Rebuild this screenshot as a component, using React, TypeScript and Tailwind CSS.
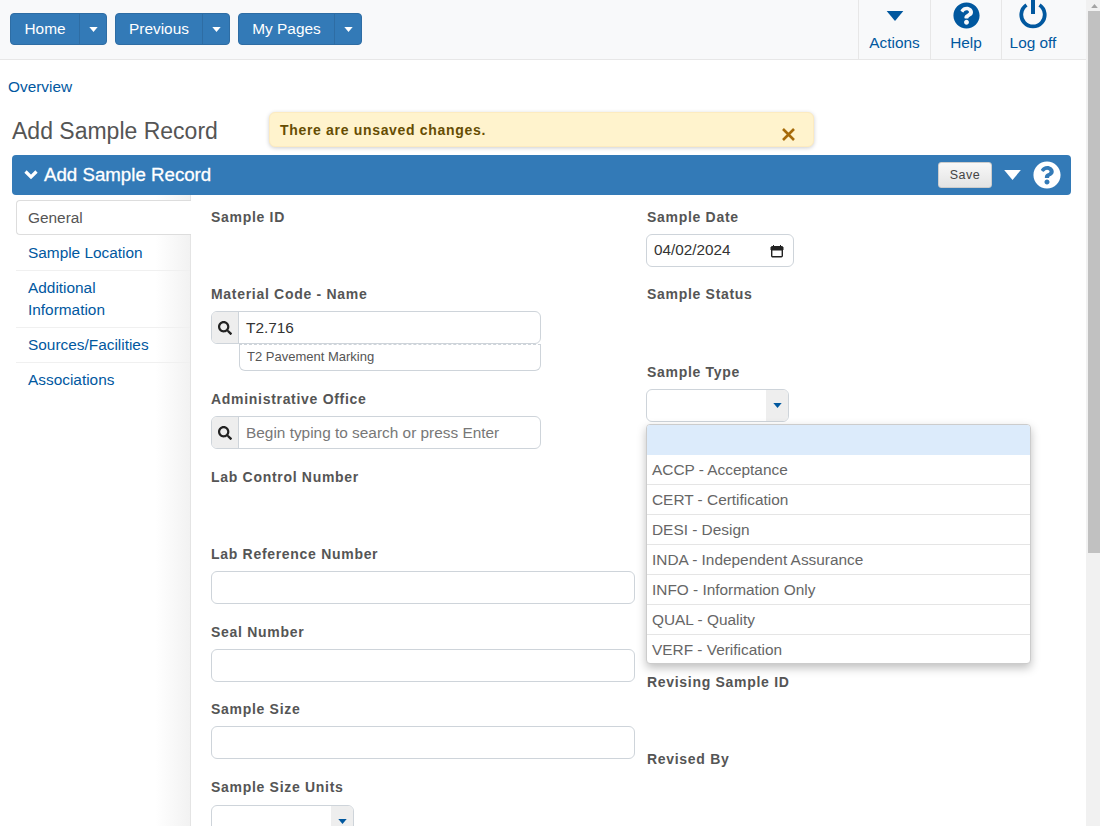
import { FaQuestionCircle, FaSearch } from "react-icons/fa";

const labelClass = "block text-[14px] font-bold leading-[20px] tracking-[0.7px] text-[#555]";
const inputClass = "h-[33px] rounded-[6px] border border-[#ced4da] bg-white";

function Caret({ className }: { className: string }) {
  return (
    <svg viewBox="0 0 10 6" className={className} aria-hidden="true">
      <path d="M0 0h10L5 6z" fill="currentColor" />
    </svg>
  );
}

function NavButton({ label, width }: { label: string; width: number }) {
  return (
    <div className="flex h-[32px] rounded-[4px] border border-[#2e6da4] bg-[#337ab7] text-[15.4px] text-white">
      <span className="flex items-center justify-center" style={{ width }}>
        {label}
      </span>
      <span className="flex w-[27px] items-center justify-center border-l border-[#2e6da4]">
        <Caret className="h-[5px] w-[9px]" />
      </span>
    </div>
  );
}

function HeaderAction({
  label,
  width,
  className = "",
  children,
}: {
  label: string;
  width: number;
  className?: string;
  children: React.ReactNode;
}) {
  return (
    <div
      className={`flex flex-col items-center border-l border-[#e7e7e7] text-[15.4px] text-[#01589f] ${className}`}
      style={{ width }}
    >
      <div className="flex h-[32px] items-center justify-center">{children}</div>
      <span className="mt-[1px] leading-[20px]">{label}</span>
    </div>
  );
}

function Field({ label, className, children }: { label: string; className: string; children?: React.ReactNode }) {
  return (
    <div className={className}>
      <label className={labelClass}>{label}</label>
      {children}
    </div>
  );
}

function SearchInput({ value, placeholder }: { value?: string; placeholder?: string }) {
  return (
    <div className={`flex w-[330px] overflow-hidden ${inputClass}`}>
      <span className="flex w-[27px] items-center justify-center border-r border-[#ced4da] bg-[#eee] text-[#222]">
        <FaSearch className="h-[14px] w-[14px]" />
      </span>
      <span className={`pl-[7px] text-[15.4px] leading-[31px] ${value ? "text-[#333]" : "text-[#777]"}`}>
        {value ?? placeholder}
      </span>
    </div>
  );
}

function SelectBox({ width }: { width: string }) {
  return (
    <div className={`flex justify-end overflow-hidden ${width} ${inputClass}`}>
      <span className="flex w-[22px] items-center justify-center bg-[#eee] text-[#01589f]">
        <Caret className="h-[5px] w-[9px]" />
      </span>
    </div>
  );
}

const sideLinks = ["Sample Location", "Additional Information", "Sources/Facilities", "Associations"];
const typeOptions = [
  "ACCP - Acceptance",
  "CERT - Certification",
  "DESI - Design",
  "INDA - Independent Assurance",
  "INFO - Information Only",
  "QUAL - Quality",
  "VERF - Verification",
];

export default function App() {
  return (
    <div className="relative flex h-[826px] w-[1100px] overflow-hidden bg-white font-['Liberation_Sans',Arial,sans-serif]">
      <div className="w-[1086px] shrink-0">
        {/* Top bar */}
        <header className="flex h-[60px] justify-between border-b border-[#e7e7e7] bg-[#f8f9fa]">
          <div className="flex gap-[8px] pl-[10px] pt-[13px]">
            <NavButton label="Home" width={68} />
            <NavButton label="Previous" width={86} />
            <NavButton label="My Pages" width={95} />
          </div>
          <div className="flex">
            <HeaderAction label="Actions" width={72}>
              <Caret className="-mt-[1px] h-[10px] w-[18px]" />
            </HeaderAction>
            <HeaderAction label="Help" width={71}>
              <FaQuestionCircle className="-mt-[2px] h-[27px] w-[27px]" />
            </HeaderAction>
            <HeaderAction label="Log off" width={85} className="pr-[22px]">
              <svg viewBox="0 0 28 29" className="-mt-[3px] h-[29px] w-[28px]" aria-hidden="true">
                <path d="M7.5 5a11.7 11.7 0 1 0 13 0" fill="none" stroke="currentColor" strokeWidth="3.8" />
                <path d="M14 0v14" stroke="currentColor" strokeWidth="4" />
              </svg>
            </HeaderAction>
          </div>
        </header>

        <div className="pl-[8px] pt-[17px] text-[15.4px] leading-[20px] text-[#01589f]">Overview</div>

        <h1 className="pl-[12px] pt-[18px] text-[23px] leading-[32px] text-[#555]">Add Sample Record</h1>

        {/* Panel heading */}
        <div className="ml-[12px] mt-[8px] flex h-[40px] w-[1059px] items-center rounded-[4px] bg-[#337ab7] pl-[12px] pr-[10px] text-white">
          <svg viewBox="0 0 14 10" className="h-[10px] w-[14px]" aria-hidden="true">
            <path d="M1.5 1.5l5.5 5.5 5.5-5.5" fill="none" stroke="currentColor" strokeWidth="3.2" />
          </svg>
          <span className="ml-[6px] text-[18.7px] leading-[20px] [-webkit-text-stroke:0.3px_white]">Add Sample Record</span>
          <div className="ml-auto flex items-center">
            <span className="flex h-[26px] w-[54px] items-center justify-center rounded-[3px] border border-[#ccc] bg-gradient-to-b from-[#f8f8f8] to-[#e4e4e4] text-[12.5px] tracking-[0.5px] text-[#444]">
              Save
            </span>
            <Caret className="ml-[11px] h-[10px] w-[19px]" />
            <FaQuestionCircle className="ml-[11px] h-[28px] w-[28px]" />
          </div>
        </div>

        <div className="flex">
          {/* Side tabs */}
          <nav className="ml-[16px] h-[631px] w-[175px] shrink-0 border-r border-[#e4e4e4] bg-gradient-to-r from-white from-80% to-[#f2f2f2] text-[15.4px]">
            <div className="mb-[1px] mt-[5px] h-[35px] w-[175px] rounded-l-[4px] border border-r-0 border-[#ddd] bg-white pl-[11px] leading-[33px] text-[#555]">
              General
            </div>
            {sideLinks.map((link) => (
              <div key={link} className="border-b border-[#f0f0f0] py-[6px] pl-[12px] pr-[40px] leading-[22px] text-[#01589f] last:border-b-0">
                {link}
              </div>
            ))}
          </nav>

          {/* Form columns */}
          <div className="flex pl-[20px]">
            <div className="w-[436px]">
              <Field label="Sample ID" className="h-[89px] pt-[12px]" />
              <Field label="Material Code - Name" className="h-[105px]">
                <div className="mt-[7px]"><SearchInput value="T2.716" /></div>
                <div className="ml-[28px] h-[27px] w-[302px] rounded-b-[6px] border border-t-0 border-[#ced4da] pl-[7px] text-[13px] leading-[24px] text-[#555] [border-top:1px_dashed_#ced4da]">
                  T2 Pavement Marking
                </div>
              </Field>
              <Field label="Administrative Office" className="h-[78px]">
                <div className="mt-[7px]"><SearchInput placeholder="Begin typing to search or press Enter" /></div>
              </Field>
              <Field label="Lab Control Number" className="h-[77px]" />
              <Field label="Lab Reference Number" className="h-[78px]">
                <div className={`mt-[7px] w-[424px] ${inputClass}`} />
              </Field>
              <Field label="Seal Number" className="h-[77px]">
                <div className={`mt-[7px] w-[424px] ${inputClass}`} />
              </Field>
              <Field label="Sample Size" className="h-[78px]">
                <div className={`mt-[7px] w-[424px] ${inputClass}`} />
              </Field>
              <Field label="Sample Size Units" className="h-[60px]">
                <div className="mt-[8px]"><SelectBox width="w-[143px]" /></div>
              </Field>
            </div>

            <div className="w-[400px]">
              <Field label="Sample Date" className="h-[89px] pt-[12px]">
                <div className={`-ml-[1px] mt-[7px] flex w-[148px] items-center justify-between pl-[7px] pr-[9px] text-[15.3px] text-[#333] ${inputClass}`}>
                  <span>04/02/2024</span>
                  <svg viewBox="0 0 14 14" className="h-[14px] w-[14px] text-[#222]" aria-hidden="true">
                    <rect x="1.7" y="2.7" width="10.6" height="10" rx="1" fill="none" stroke="currentColor" strokeWidth="1.4" />
                    <path d="M1 3h12v3H1zM3.5 1v2M10.5 1v2" fill="currentColor" stroke="currentColor" strokeWidth="1" />
                  </svg>
                </div>
              </Field>
              <Field label="Sample Status" className="h-[78px]" />
              <Field label="Sample Type" className="h-[310px]">
                <div className="-ml-[1px] mt-[7px]"><SelectBox width="w-[143px]" /></div>
              </Field>
              <Field label="Revising Sample ID" className="h-[77px]" />
              <Field label="Revised By" className="" />
            </div>
          </div>
        </div>
      </div>

      {/* Page scrollbar */}
      <div className="flex w-[14px] shrink-0 flex-col bg-[#f1f1f1] pl-[2px]">
        <div className="flex h-[11px] items-center justify-center text-[#a3a3a3]">
          <Caret className="h-[4px] w-[7px] rotate-180" />
        </div>
        <div className="h-[542px] bg-[#c1c1c1]" />
      </div>

      {/* Unsaved changes toast */}
      <div className="absolute left-[269px] top-[112px] flex h-[35px] w-[545px] items-center justify-between rounded-[6px] border border-[#fdebc0] bg-[#fff3cd] pl-[10px] pr-[18px] shadow-[0_1px_4px_rgba(0,0,0,0.2)]">
        <span className="mt-[1px] text-[14px] font-bold tracking-[0.68px] text-[#664d03]">There are unsaved changes.</span>
        <svg viewBox="0 0 13 13" className="mt-[9px] h-[13px] w-[13px] text-[#a66a0a]" aria-hidden="true">
          <path d="M1 1l11 11M12 1L1 12" fill="none" stroke="currentColor" strokeWidth="2.6" />
        </svg>
      </div>

      {/* Sample Type dropdown */}
      <div className="absolute left-[646px] top-[424px] h-[240px] w-[385px] overflow-hidden rounded-[4px] border border-[#ccc] bg-white text-[15.4px] text-[#666] shadow-[0_4px_10px_rgba(0,0,0,0.25)]">
        <div className="h-[30px] bg-[#dcebfb]" />
        {typeOptions.map((option) => (
          <div key={option} className="h-[30px] border-b border-[#e5e5e5] pl-[5px] leading-[30px] last:border-b-0">
            {option}
          </div>
        ))}
      </div>
    </div>
  );
}
